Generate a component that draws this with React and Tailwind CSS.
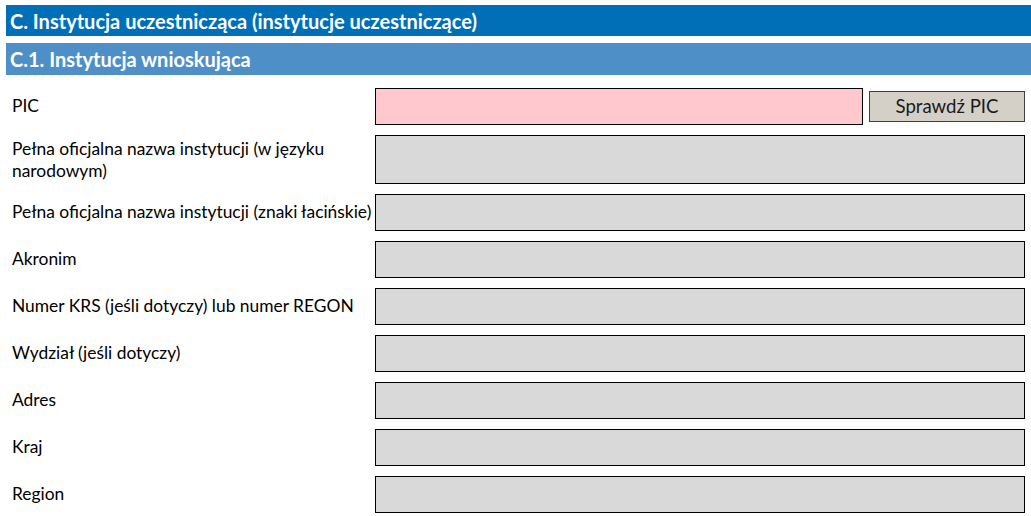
export default function App() {
  const rows = [
    { label: 'Pełna oficjalna nazwa instytucji (znaki łacińskie)' },
    { label: 'Akronim' },
    { label: 'Numer KRS (jeśli dotyczy) lub numer REGON' },
    { label: 'Wydział (jeśli dotyczy)' },
    { label: 'Adres' },
    { label: 'Kraj' },
    { label: 'Region' },
  ];

  return (
    <div className="w-[1031px] h-[516px] overflow-hidden bg-white pl-[6px] pt-[5px] font-['Lato',sans-serif] text-black">
      {/* Section headers */}
      <div className="h-[31px] bg-[#006fb7] text-white font-bold text-[20px] pl-[4px] flex items-center">
        C. Instytucja uczestnicząca (instytucje uczestniczące)
      </div>
      <div className="h-[32px] mt-[7px] bg-[#4f8fc8] text-white font-bold text-[20px] pl-[4px] flex items-center">
        C.1. Instytucja wnioskująca
      </div>

      {/* Form */}
      <div className="mt-[13px] pr-[6px] flex flex-col gap-[10px]">
        <div className="flex items-center h-[37px]">
          <div className="w-[369px] pl-[6px] text-[17.4px]">PIC</div>
          <div className="w-[488px] h-full bg-[#ffc7ce] border border-black" />
          <button className="ml-[6px] w-[156px] h-[31px] bg-[#d4d0c8] border border-[#404040] text-[18.6px] text-[#1a1a1a]">
            Sprawdź PIC
          </button>
        </div>

        <div className="flex items-center h-[49px]">
          <div className="w-[369px] pl-[6px] text-[17.4px] leading-[22px]">
            Pełna oficjalna nazwa instytucji (w języku
            <br />
            narodowym)
          </div>
          <div className="flex-1 h-full bg-[#d9d9d9] border border-black" />
        </div>

        {rows.map((row, i) => (
          <div key={i} className="flex items-center h-[37px]">
            <div className="w-[369px] pl-[6px] text-[17.4px] whitespace-nowrap">{row.label}</div>
            <div className="flex-1 h-full bg-[#d9d9d9] border border-black" />
          </div>
        ))}
      </div>
    </div>
  );
}
